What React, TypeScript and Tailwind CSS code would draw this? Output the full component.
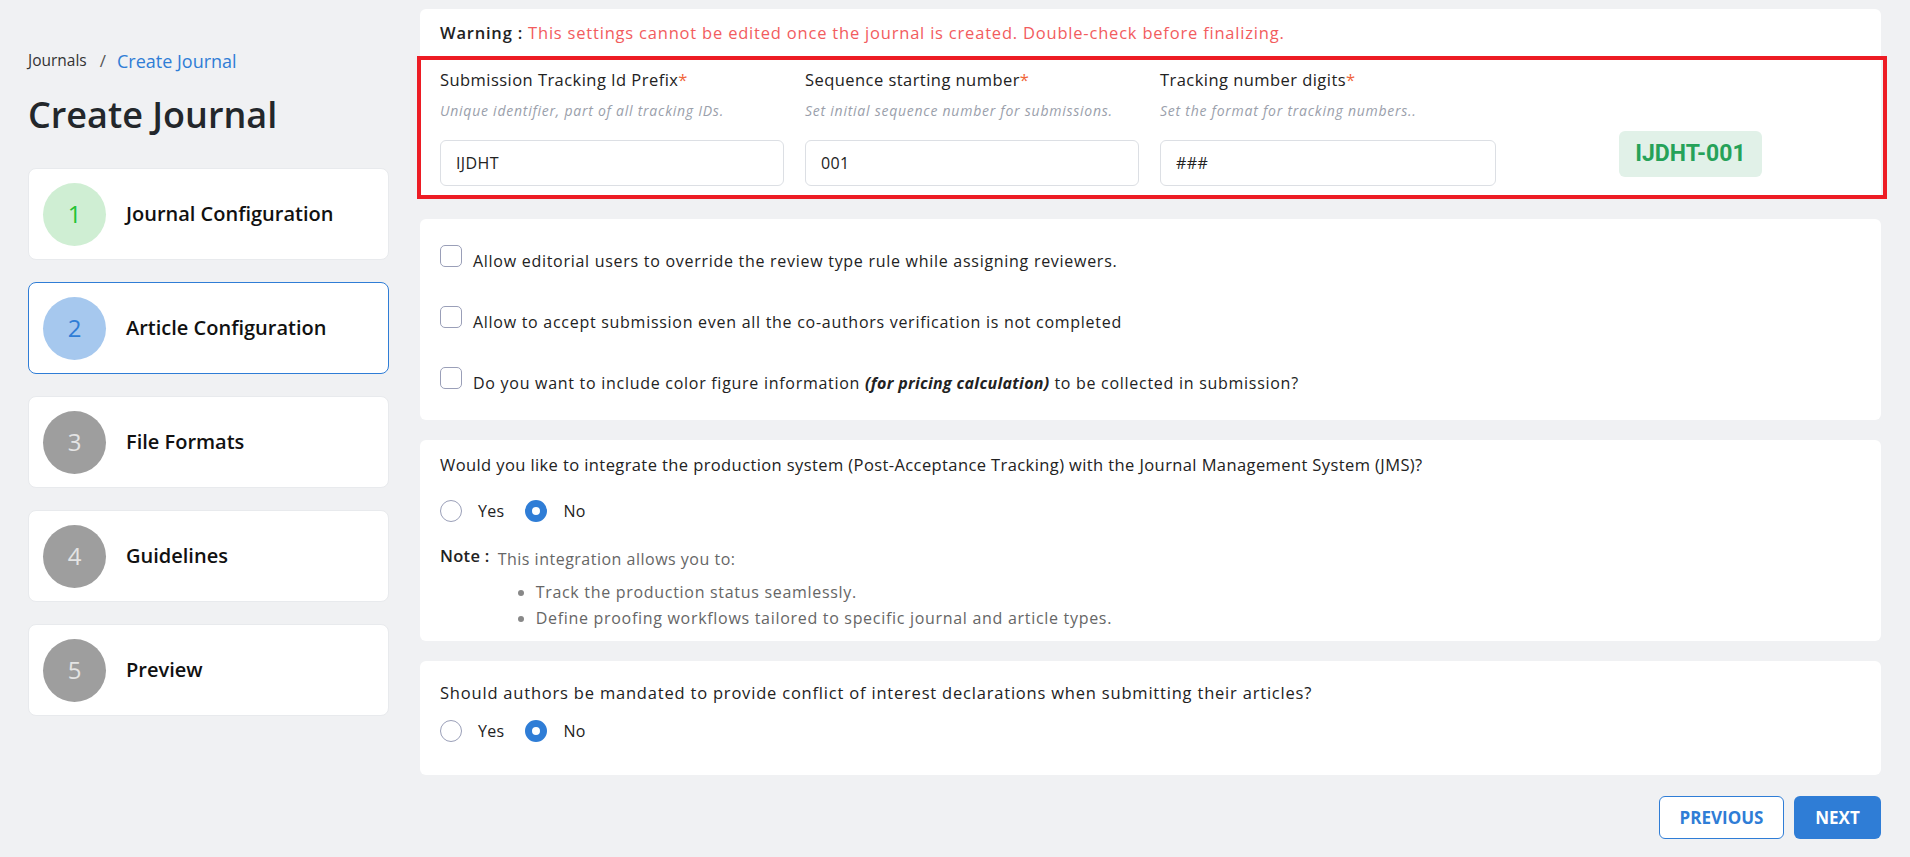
import { useState } from 'react';

const STEPS = [
  { n: 1, label: 'Journal Configuration', circle: 'bg-[#cfeed3] text-[#22c232]', active: false },
  { n: 2, label: 'Article Configuration', circle: 'bg-[#a6c8ee] text-[#2f7dd6]', active: true },
  { n: 3, label: 'File Formats', circle: 'bg-[#9e9e9e] text-[#e4e4e4]', active: false },
  { n: 4, label: 'Guidelines', circle: 'bg-[#9e9e9e] text-[#e4e4e4]', active: false },
  { n: 5, label: 'Preview', circle: 'bg-[#9e9e9e] text-[#e4e4e4]', active: false },
];

const TRACKING = [
  { label: 'Submission Tracking Id Prefix', hint: 'Unique identifier, part of all tracking IDs.', value: 'IJDHT' },
  { label: 'Sequence starting number', hint: 'Set initial sequence number for submissions.', value: '001' },
  { label: 'Tracking number digits', hint: 'Set the format for tracking numbers..', value: '###' },
];

function Radio({ checked, label, onClick }: { checked: boolean; label: string; onClick: () => void }) {
  return (
    <button type="button" onClick={onClick} className="flex items-center gap-[16px] h-6">
      <span
        className={`h-[22px] w-[22px] rounded-full bg-white ${
          checked ? 'border-[7px] border-[#2f7dd6]' : 'border border-[#9a9fb8]'
        }`}
      />
      <span className="text-[16px] tracking-[0.3px] text-[#222]">{label}</span>
    </button>
  );
}

function Checkbox({ children }: { children: React.ReactNode }) {
  const [on, setOn] = useState(false);
  return (
    <label className="flex items-start gap-[11px] cursor-pointer" onClick={() => setOn(!on)}>
      <span
        className={`h-[22px] w-[22px] shrink-0 rounded-[5px] border-[1.5px] ${
          on ? 'border-[#2f7dd6] bg-[#2f7dd6]' : 'border-[#9a9fb8] bg-white'
        }`}
      />
      <span className="mt-[4px] text-[16px] leading-6 tracking-[0.72px] text-[#222]">{children}</span>
    </label>
  );
}

export default function App() {
  const [integrate, setIntegrate] = useState('no');
  const [conflict, setConflict] = useState('no');

  return (
    <div className="min-h-screen bg-[#f0f1f3] flex font-['Open_Sans',sans-serif] text-[#222]">
      {/* Sidebar */}
      <aside className="ml-[28px] w-[361px] shrink-0 pt-[50px]">
        <div className="flex items-center h-[22px]">
          <span className="text-[15.5px] text-[#333]">Journals</span>
          <span className="ml-[13px] mr-[11px] text-[17px] text-[#555]">/</span>
          <span className="text-[18px] text-[#2f7dd6]">Create Journal</span>
        </div>
        <h1 className="mt-[21px] text-[36px] leading-[44px] font-semibold text-[#23272b]">Create Journal</h1>
        <div className="mt-[31px] flex flex-col gap-[22px]">
          {STEPS.map((s) => (
            <div
              key={s.n}
              className={`h-[92px] rounded-lg bg-white flex items-center pl-[14px] border ${
                s.active ? 'border-[#2f7dd6]' : 'border-[#e8eaed]'
              }`}
            >
              <div className={`h-[63px] w-[63px] rounded-full flex items-center justify-center text-[24px] ${s.circle}`}>
                {s.n}
              </div>
              <span className="ml-[20px] text-[20px] font-semibold text-[#111]">{s.label}</span>
            </div>
          ))}
        </div>
      </aside>

      {/* Main */}
      <main className="ml-[31px] w-[1461px] pt-[9px] flex flex-col gap-[20px]">
        {/* Tracking settings */}
        <section className="bg-white rounded-md">
          <div className="pl-[20px] pt-[12px] h-[47px] text-[16.5px] leading-6 tracking-[0.8px]">
            <span className="font-semibold text-[#222]">Warning : </span>
            <span className="text-[#f25c5e]">
              This settings cannot be edited once the journal is created. Double-check before finalizing.
            </span>
          </div>
          <div className="ml-[-3px] mr-[-6px] border-4 border-[#ed1c24] pl-[19px] pr-[19px] pt-[8px] pb-[9px] grid grid-cols-[344px_334px_336px_1fr] gap-x-[21px]">
            {TRACKING.map((t) => (
              <div key={t.label}>
                <div className="text-[16.5px] leading-6 tracking-[0.45px]">
                  {t.label}
                  <span className="text-[#f0653a]">*</span>
                </div>
                <div className="mt-[9px] text-[14px] leading-5 italic tracking-[0.75px] text-[#9aa0ab]">{t.hint}</div>
                <input
                  defaultValue={t.value}
                  className="mt-[19px] h-[46px] w-full rounded-md border border-[#dcdfe4] px-[15px] text-[16px] tracking-[0.4px] text-[#222] outline-none"
                />
              </div>
            ))}
            <div className="flex items-end justify-center pb-[9px]">
              <span className="h-[46px] w-[143px] rounded-md bg-[#e1f1e8] text-[#26a259] text-[23px] font-bold font-['Roboto',sans-serif] flex items-center justify-center">
                IJDHT-001
              </span>
            </div>
          </div>
        </section>

        {/* Checkboxes */}
        <section className="bg-white rounded-md pl-[20px] pt-[26px] pb-[25px] flex flex-col gap-[33px]">
          <Checkbox>Allow editorial users to override the review type rule while assigning reviewers.</Checkbox>
          <Checkbox>Allow to accept submission even all the co-authors verification is not completed</Checkbox>
          <Checkbox>
            Do you want to include color figure information <b className="italic font-bold tracking-[0.3px]">(for pricing calculation)</b> to be
            collected in submission?
          </Checkbox>
        </section>

        {/* Production integration */}
        <section className="bg-white rounded-md pl-[20px] pt-[13px] pb-[10px]">
          <p className="text-[16.5px] leading-6 font-medium tracking-[0.4px]">
            Would you like to integrate the production system (Post-Acceptance Tracking) with the Journal Management System (JMS)?
          </p>
          <div className="mt-[22px] flex items-center gap-[21px]">
            <Radio checked={integrate === 'yes'} label="Yes" onClick={() => setIntegrate('yes')} />
            <Radio checked={integrate === 'no'} label="No" onClick={() => setIntegrate('no')} />
          </div>
          <div className="mt-[24px] flex items-start">
            <span className="text-[16.5px] leading-6 font-semibold text-[#222] tracking-[0.3px] -mt-[3px]">Note :</span>
            <div className="ml-[8px]">
              <p className="text-[16px] leading-6 tracking-[0.5px] text-[#666]">This integration allows you to:</p>
              <ul className="mt-[8px] ml-[22px] list-disc pl-[16px] text-[16px] leading-[26px] tracking-[0.7px] text-[#666] marker:text-[#888]">
                <li>Track the production status seamlessly.</li>
                <li>Define proofing workflows tailored to specific journal and article types.</li>
              </ul>
            </div>
          </div>
        </section>

        {/* Conflict of interest */}
        <section className="bg-white rounded-md pl-[20px] pt-[20px] pb-[32px]">
          <p className="text-[16.5px] leading-6 font-medium tracking-[0.8px]">
            Should authors be mandated to provide conflict of interest declarations when submitting their articles?
          </p>
          <div className="mt-[14px] flex items-center gap-[21px]">
            <Radio checked={conflict === 'yes'} label="Yes" onClick={() => setConflict('yes')} />
            <Radio checked={conflict === 'no'} label="No" onClick={() => setConflict('no')} />
          </div>
        </section>

        {/* Footer buttons */}
        <div className="mt-[1px] flex justify-end gap-[10px]">
          <button className="h-[43px] w-[125px] rounded-md border border-[#2f7dd6] bg-white text-[#2f7dd6] text-[17px] font-bold">
            PREVIOUS
          </button>
          <button className="h-[43px] w-[87px] rounded-md bg-[#2f7dd6] text-white text-[17px] font-bold">NEXT</button>
        </div>
      </main>
    </div>
  );
}
